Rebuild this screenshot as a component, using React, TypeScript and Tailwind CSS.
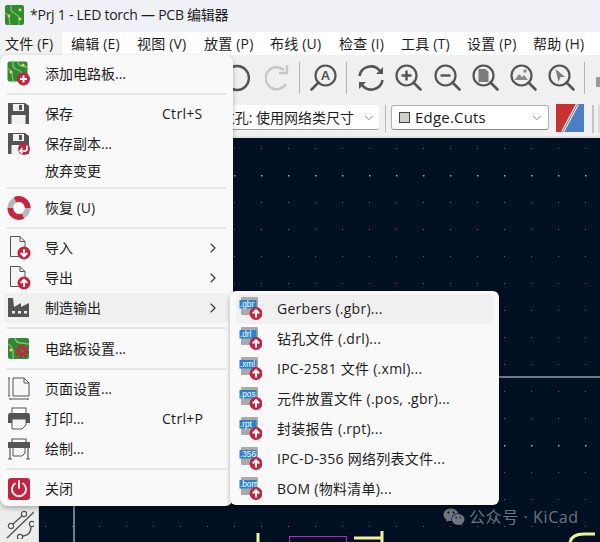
import React from "react";
import { FaWeixin } from "react-icons/fa";
import { ChevronDown, ChevronRight } from "lucide-react";

const G = "#545454";
const R = "#c4243f";

function Badge({ cx, cy, r = 6.5, kind }: { cx: number; cy: number; r?: number; kind: "plus" | "up" | "down" | "back" }) {
  return (
    <g>
      <circle cx={cx} cy={cy} r={r} fill={R} />
      {kind === "plus" && <path d={`M${cx - 3.5} ${cy}H${cx + 3.5}M${cx} ${cy - 3.5}V${cy + 3.5}`} stroke="#fff" strokeWidth="2" />}
      {kind === "up" && <path d={`M${cx} ${cy + 4}V${cy - 3}M${cx - 3.2} ${cy}L${cx} ${cy - 3.4}L${cx + 3.2} ${cy}`} stroke="#fff" strokeWidth="2" fill="none" />}
      {kind === "down" && <path d={`M${cx} ${cy - 4}V${cy + 3}M${cx - 3.2} ${cy}L${cx} ${cy + 3.4}L${cx + 3.2} ${cy}`} stroke="#fff" strokeWidth="2" fill="none" />}
      {kind === "back" && <path d={`M${cx + 3} ${cy - 3.5}V${cy}Q${cx + 3} ${cy + 2} ${cx} ${cy + 2}H${cx - 3.5}M${cx - 1.5} ${cy - 1}L${cx - 4} ${cy + 2}L${cx - 1.5} ${cy + 4.5}`} stroke="#fff" strokeWidth="1.7" fill="none" />}
    </g>
  );
}

function Pcb({ children }: { children?: React.ReactNode }) {
  return (
    <svg width="24" height="26" viewBox="0 0 24 26">
      <rect x="0.5" y="0.5" width="20" height="20" rx="2" fill="#2f8a32" />
      <path d="M6 .5V4Q6 7 9 8L13 10Q15 11 15 14V20M1 8Q4 9 5 12L6 20M11 .5Q11 4 15 5L20 6" stroke="#86c070" strokeWidth="1.3" fill="none" />
      <circle cx="4" cy="11" r="1.6" fill="#e9d44a" />
      <circle cx="16" cy="4" r="1.6" fill="#e9d44a" />
      <circle cx="13" cy="15" r="1.4" fill="#e9d44a" />
      {children}
    </svg>
  );
}

function Floppy({ children }: { children?: React.ReactNode }) {
  return (
    <svg width="24" height="26" viewBox="0 0 24 26">
      <path d="M1 2H18L22 5V23H1Z" fill={G} />
      <rect x="6" y="3" width="11" height="7" fill="#f2f2f2" />
      <rect x="12" y="4" width="3" height="5" fill={G} />
      <rect x="4.5" y="14" width="14" height="9" fill="#f2f2f2" />
      {children}
    </svg>
  );
}

function Doc({ kind }: { kind: "up" | "down" }) {
  return (
    <svg width="24" height="26" viewBox="0 0 24 26">
      <path d="M3.5 1.5H13L18 6.5V21.5H3.5Z" fill="#f5f5f5" stroke={G} strokeWidth="1" />
      <path d="M13 1.5V6.5H18" fill="none" stroke={G} strokeWidth="1" />
      <Badge cx={17} cy={18} kind={kind} />
    </svg>
  );
}

function Recover() {
  return (
    <svg width="24" height="24" viewBox="0 0 24 24">
      <circle cx="12" cy="12" r="8.7" fill="none" stroke="#b8b8b8" strokeWidth="5.6" />
      <path d="M8 3.7A9 9 0 0 1 20.7 12" fill="none" stroke={R} strokeWidth="5.6" />
      <path d="M16 20.3A9 9 0 0 1 3.3 12" fill="none" stroke={R} strokeWidth="5.6" />
    </svg>
  );
}

function Factory() {
  return (
    <svg width="24" height="24" viewBox="0 0 24 24">
      <path d="M1 2H6L7 11L14 7V11L22 7V21H1Z" fill={G} />
      <rect x="5" y="15" width="3" height="2.5" fill="#eee" />
      <rect x="11" y="15" width="3" height="2.5" fill="#eee" />
      <rect x="17" y="15" width="3" height="2.5" fill="#eee" />
    </svg>
  );
}

function Settings() {
  return (
    <svg width="24" height="24" viewBox="0 0 24 24">
      <rect x="1" y="1" width="21" height="21" rx="2" fill="#2f8a32" />
      <path d="M8 1Q9 6 14 6L22 7M1 7Q5 9 6 14V22" stroke="#86c070" strokeWidth="1.3" fill="none" />
      <circle cx="4" cy="13" r="1.6" fill="#e9d44a" />
      <circle cx="15" cy="14" r="3.6" fill="none" stroke={R} strokeWidth="3" />
      <circle cx="15" cy="14" r="6" fill="none" stroke={R} strokeWidth="2" strokeDasharray="2.2 2.5" />
    </svg>
  );
}

function PageSetup() {
  return (
    <svg width="24" height="24" viewBox="0 0 24 24">
      <path d="M6 1H17L22 6V19H6Z" fill="#f8f8f8" stroke={G} strokeWidth="1" />
      <path d="M17 1V6H22" fill="none" stroke={G} />
      <path d="M2 1V19M1 1H3M1 19H3M3 22H21M3 21V23M21 21V23" stroke={G} strokeWidth="1" fill="none" />
    </svg>
  );
}

function Printer() {
  return (
    <svg width="24" height="24" viewBox="0 0 24 24">
      <rect x="5" y="1" width="14" height="6" fill="#fff" stroke={G} />
      <path d="M3 6H21Q23 6 23 9V16H1V9Q1 6 3 6Z" fill={G} />
      <path d="M5 12H19V18L15 22H5Z" fill="#f5f5f5" stroke={G} />
    </svg>
  );
}

function Plotter() {
  return (
    <svg width="24" height="24" viewBox="0 0 24 24">
      <path d="M5 5V2H19V5" fill="none" stroke={G} strokeWidth="1.2" />
      <rect x="1" y="5" width="22" height="6" fill={G} />
      <path d="M6 11V19H15L18 16V11" fill="#f7f7f7" stroke={G} />
      <path d="M3 11V22M21 11V22M1 22H5M19 22H23" stroke={G} strokeWidth="1.2" />
    </svg>
  );
}

function Power() {
  return (
    <svg width="24" height="24" viewBox="0 0 24 24">
      <rect x="1" y="1" width="22" height="22" rx="3" fill={R} />
      <path d="M8 6.5A7 7 0 1 0 16 6.5" stroke="#fff" strokeWidth="1.8" fill="none" strokeLinecap="round" />
      <path d="M12 4V11" stroke="#fff" strokeWidth="1.8" strokeLinecap="round" />
    </svg>
  );
}

function ExportIcon({ ext }: { ext: string }) {
  return (
    <svg width="24" height="24" viewBox="0 0 24 24">
      <rect x="3" y="0" width="17" height="18" rx="1" fill="#aaaaaa" />
      <rect x="1.5" y="3" width="17" height="8.5" fill="#2b82cc" />
      <text x="2" y="10.3" fontSize="8.2" fill="#fff" fontFamily="'Liberation Sans',sans-serif">{ext}</text>
      <Badge cx={18} cy={16.5} kind="up" />
    </svg>
  );
}

function Mag({ children }: { children?: React.ReactNode }) {
  return (
    <svg width="28" height="28" viewBox="0 0 28 28" className="shrink-0">
      <circle cx="15.5" cy="11.5" r="10" fill="none" stroke={G} strokeWidth="2.2" />
      <path d="M8.5 18.5L1.5 25.5" stroke={G} strokeWidth="2.6" strokeLinecap="round" />
      {children}
    </svg>
  );
}

function MagRight({ children }: { children?: React.ReactNode }) {
  return (
    <svg width="28" height="28" viewBox="0 0 28 28" className="shrink-0">
      <circle cx="11.5" cy="11.5" r="10" fill="none" stroke={G} strokeWidth="2.2" />
      <path d="M18.5 18.5L25.5 25.5" stroke={G} strokeWidth="2.6" strokeLinecap="round" />
      {children}
    </svg>
  );
}

function Sep() {
  return <div className="w-[1px] h-[32px] bg-[#b4b4b4] shrink-0" />;
}

type Row =
  | { sep: number }
  | { label: string; icon?: React.ReactNode; key2?: string; arrow?: boolean; active?: boolean; h?: string };

const rows: Row[] = [
  { label: "添加电路板...", icon: <Pcb><Badge cx={16.5} cy={18} r={6.5} kind="plus" /></Pcb> },
  { sep: 10 },
  { label: "保存", icon: <Floppy />, key2: "Ctrl+S" },
  { label: "保存副本...", icon: <Floppy><Badge cx={17} cy={18} r={6} kind="back" /></Floppy> },
  { label: "放弃变更", h: "h-[24px]" },
  { sep: 10 },
  { label: "恢复 (U)", icon: <Recover /> },
  { sep: 10 },
  { label: "导入", icon: <Doc kind="down" />, arrow: true },
  { label: "导出", icon: <Doc kind="up" />, arrow: true },
  { label: "制造输出", icon: <Factory />, arrow: true, active: true },
  { sep: 11 },
  { label: "电路板设置...", icon: <Settings /> },
  { sep: 10 },
  { label: "页面设置...", icon: <PageSetup /> },
  { label: "打印...", icon: <Printer />, key2: "Ctrl+P" },
  { label: "绘制...", icon: <Plotter /> },
  { sep: 10 },
  { label: "关闭", icon: <Power /> },
];

const subRows = [
  { ext: ".gbr", label: "Gerbers (.gbr)...", active: true },
  { ext: ".drl", label: "钻孔文件 (.drl)..." },
  { ext: ".xml", label: "IPC-2581 文件 (.xml)..." },
  { ext: ".pos", label: "元件放置文件 (.pos, .gbr)..." },
  { ext: ".rpt", label: "封装报告 (.rpt)..." },
  { ext: ".356", label: "IPC-D-356 网络列表文件..." },
  { ext: ".bom", label: "BOM (物料清单)..." },
];

const menus = [
  "文件 (F)", "编辑 (E)", "视图 (V)", "放置 (P)", "布线 (U)", "检查 (I)", "工具 (T)", "设置 (P)", "帮助 (H)",
];
const menuW = ["w-[66px]", "w-[66px]", "w-[67px]", "w-[66px]", "w-[69px]", "w-[62px]", "w-[66px]", "w-[66px]", "w-[67px]"];

export default function App() {
  return (
    <div className="relative w-[600px] h-[542px] overflow-hidden flex flex-col bg-[#f0f0f0] text-[14px] text-[#1c1c1c] font-['Open_Sans','Noto_Sans_CJK_SC',sans-serif]">
      {/* title bar */}
      <div className="h-[32px] bg-[#eff1f6] flex items-center pl-[5px] gap-[6px] shrink-0">
        <svg width="19" height="20" viewBox="0 0 19 20" className="-mt-[2px]">
          <rect width="19" height="20" rx="2" fill="#2f8a32" />
          <path d="M6 0V4Q6 7 9 8L12 10Q14 11 14 14V20M0 8Q3 9 4 12L5 20" stroke="#86c070" strokeWidth="1.2" fill="none" />
          <circle cx="4" cy="11" r="1.4" fill="#e9d44a" />
          <circle cx="15" cy="5" r="1.4" fill="#e9d44a" />
          <circle cx="15" cy="14" r="1.4" fill="#e9d44a" />
        </svg>
        <span className="text-[14px] whitespace-nowrap tracking-[-0.25px] pb-[3px]">*Prj 1 - LED torch — PCB 编辑器</span>
      </div>

      {/* menu bar */}
      <div className="h-[23px] bg-white flex items-center shrink-0">
        {menus.map((m, i) => (
          <div key={m} className={`${menuW[i]} h-full pl-[5px] flex items-center whitespace-nowrap tracking-[0.2px] relative`}>
            {i === 0 && <span className="absolute left-0 top-0 w-[62px] h-full bg-[#f2f2f2]" />}
            <span className="relative">{m}</span>
          </div>
        ))}
      </div>

      {/* toolbar 1 */}
      <div className="h-[45px] shrink-0 flex items-center pl-[224px] pt-[1px]">
        <svg width="26" height="28" viewBox="0 0 26 28" className="shrink-0">
          <path d="M5 5A12 12 0 1 1 5 23" fill="none" stroke={G} strokeWidth="2.4" />
        </svg>
        <svg width="24" height="28" viewBox="0 0 24 28" className="ml-[15px] shrink-0">
          <path d="M19 6A11 11 0 1 0 21 20" fill="none" stroke="#c8c8c8" strokeWidth="2.4" />
          <path d="M22 1V9H14" fill="none" stroke="#c8c8c8" strokeWidth="2.4" />
        </svg>
        <div className="ml-[10px]"><Sep /></div>
        <div className="ml-[10px]">
          <Mag>
            <text x="15.5" y="16" fontSize="13" fontWeight="700" fill={G} textAnchor="middle" fontFamily="'Liberation Sans',sans-serif">A</text>
          </Mag>
        </div>
        <div className="ml-[8px]"><Sep /></div>
        <svg width="28" height="28" viewBox="0 0 28 28" className="ml-[10px] shrink-0">
          <path d="M2.5 12A11.5 11.5 0 0 1 23 7" fill="none" stroke={G} strokeWidth="2.6" />
          <path d="M25.5 16A11.5 11.5 0 0 1 5 21" fill="none" stroke={G} strokeWidth="2.6" />
          <path d="M26 3V10H19ZM2 25V18H9Z" fill={G} />
        </svg>
        <div className="ml-[10px]">
          <MagRight><path d="M6.5 11.5H16.5M11.5 6.5V16.5" stroke={G} strokeWidth="2.4" /></MagRight>
        </div>
        <div className="ml-[11px]">
          <MagRight><path d="M6.5 11.5H16.5" stroke={G} strokeWidth="2.4" /></MagRight>
        </div>
        <div className="ml-[10px]">
          <MagRight><path d="M6.5 5H13.5L16.5 8V18H6.5Z" fill="#7c7c7c" /></MagRight>
        </div>
        <div className="ml-[10px]">
          <MagRight>
            <path d="M4.5 16L9 10L12 13L14 11L18 16Z" fill="#8c8c8c" />
            <circle cx="15" cy="7" r="1.8" fill="#8c8c8c" />
          </MagRight>
        </div>
        <div className="ml-[10px]">
          <MagRight><path d="M7.5 5L17 13H12.5L10.5 18Z" fill="#7c7c7c" /></MagRight>
        </div>
        <div className="ml-[8px]"><Sep /></div>
        <div className="ml-[11px] w-[6px] h-[10px] mt-[8px] bg-[#9c9c9c] shrink-0" />
      </div>

      {/* toolbar 2 */}
      <div className="h-[38px] shrink-0 flex items-start pt-[5px] border-b-2 border-[#e2e2e2]">
        <div className="w-[379px] h-[25px] shrink-0 bg-white border-b border-[#9a9a9a] rounded-[3px] flex items-center justify-end pr-[25px] relative whitespace-nowrap">
          过孔: 使用网络类尺寸
          <ChevronDown size={14} strokeWidth={1.3} className="absolute right-[3px] top-[6px] text-[#666]" />
        </div>
        <div className="w-[1px] h-[28px] bg-[#b8b8b8] ml-[6px] shrink-0" />
        <div className="w-[158px] h-[25px] ml-[5px] shrink-0 bg-white border border-[#b0b0b0] border-b-[#8a8a8a] rounded-[3px] flex items-center pl-[7px] relative">
          <span className="w-[11px] h-[11px] bg-[#d0d0c8] border border-[#444] shrink-0" />
          <span className="ml-[5px] text-[15px] tracking-[0.2px]">Edge.Cuts</span>
          <ChevronDown size={14} strokeWidth={1.3} className="absolute right-[4px] top-[5px] text-[#666]" />
        </div>
        <svg width="28" height="28" viewBox="0 0 28 28" className="ml-[7px] shrink-0 -mt-[1px]">
          <rect width="28" height="28" fill="#c83232" />
          <path d="M22 0H28V28H7Z" fill="#4d7fc4" />
          <path d="M21.5 0L6.5 28" stroke="#f0f0f0" strokeWidth="3" />
          <path d="M21.5 0L6.5 28" stroke="#777" strokeWidth="1" />
        </svg>
        <div className="w-[2px] h-[28px] bg-[#c4c4c4] ml-[8px] shrink-0" />
        <div className="w-[4px] h-[28px] bg-[#dcdcdc] ml-[4px] shrink-0" />
      </div>

      {/* work area */}
      <div className="flex-1 flex min-h-0">
        <div className="w-[39px] shrink-0 bg-[#f0f0f0] flex flex-col justify-end border-r border-[#cfcfcf]">
          <div className="h-[36px] bg-[#ececec] flex items-center justify-center">
            <svg width="30" height="30" viewBox="0 0 30 30">
              <circle cx="20" cy="5" r="2.6" fill="#f4f4f4" stroke={G} strokeWidth="1.2" />
              <circle cx="7" cy="17" r="2.6" fill="#f4f4f4" stroke={G} strokeWidth="1.2" />
              <path d="M9 15L18 7" stroke={G} strokeWidth="1.4" />
              <path d="M3 29L30 3" stroke={G} strokeWidth="1.4" />
              <circle cx="28" cy="15" r="2.6" fill="#f4f4f4" stroke={G} strokeWidth="1.2" />
              <circle cx="16" cy="28" r="2.6" fill="#f4f4f4" stroke={G} strokeWidth="1.2" />
              <path d="M19 27Q27 26 27 18" stroke={G} strokeWidth="1.4" fill="none" />
            </svg>
          </div>
        </div>
        <div className="relative flex-1 bg-[#001023]">
          <svg width="561" height="404" viewBox="0 0 561 404" className="block">
            <defs>
              <pattern id="dots" x="6" y="10" width="27" height="27" patternUnits="userSpaceOnUse">
                <rect x="0" y="0" width="1" height="1" fill="#5f6b78" />
              </pattern>
              <pattern id="bright" x="6" y="37" width="27" height="270" patternUnits="userSpaceOnUse">
                <rect x="0" y="-0.5" width="1.5" height="2" fill="#a8aeb6" />
              </pattern>
            </defs>
            <rect width="561" height="404" fill="url(#dots)" />
            <rect width="561" height="404" fill="url(#bright)" />
            <path d="M0 239H561M35 0V404" stroke="#e4e4e4" strokeWidth="1" />
            <path d="M219 395V404M315 400H343M343 393V404" stroke="#f4f09a" strokeWidth="3" fill="none" />
            <rect x="250.5" y="398.5" width="57" height="10" fill="none" stroke="#c81cc8" />
            <path d="M531 404Q533 396 545 396H556" stroke="#f4f09a" strokeWidth="3" fill="none" />
          </svg>
          <div className="absolute left-[404px] top-[367px] flex items-center gap-[4px] text-[#6f757c] text-[16px] tracking-[0.6px] whitespace-nowrap">
            <FaWeixin size={22} />
            <span>公众号 · KiCad</span>
          </div>
        </div>
      </div>

      {/* file menu */}
      <div className="absolute left-0 top-[55px] w-[233px] bg-[#f9f9f9] rounded-[8px] shadow-[0_2px_5px_rgba(0,0,0,0.3)] px-[4px] pt-[4px] pb-[2px]">
        {rows.map((r, i) => {
          if ("sep" in r) {
            return (
              <div key={i} className={`${r.sep === 11 ? "h-[11px]" : "h-[10px]"} flex items-center px-[3px] pb-[1px]`}>
                <div className="w-full h-[2px] bg-[#e6e6e6]" />
              </div>
            );
          }
          return (
            <div key={i} className={`${r.h ?? "h-[30px]"} ${r.active ? "bg-[#f0f0f0] rounded-[5px]" : ""} flex items-center pl-[3px] relative`}>
              <div className="w-[24px] h-[24px] flex items-center justify-center shrink-0">{r.icon}</div>
              <span className="ml-[14px] whitespace-nowrap pb-[2px]">{r.label}</span>
              {r.key2 && <span className="absolute left-[158px] whitespace-nowrap tracking-[0.3px] pb-[2px]">{r.key2}</span>}
              {r.arrow && <ChevronRight size={16} strokeWidth={1.6} className="absolute left-[201px] text-[#333]" />}
            </div>
          );
        })}
      </div>

      {/* submenu */}
      <div className="absolute left-[230px] top-[291px] w-[269px] bg-[#f9f9f9] rounded-[6px] shadow-[0_2px_5px_rgba(0,0,0,0.3)] px-[6px] pt-[3px] pb-[1px]">
        {subRows.map((s) => (
          <div key={s.ext} className={`h-[30px] ${s.active ? "bg-[#f0f0f0] rounded-[5px]" : ""} flex items-center pl-[2px]`}>
            <ExportIcon ext={s.ext} />
            <span className="ml-[15px] whitespace-nowrap tracking-[0.27px] pb-[2px]">{s.label}</span>
          </div>
        ))}
      </div>
    </div>
  );
}
